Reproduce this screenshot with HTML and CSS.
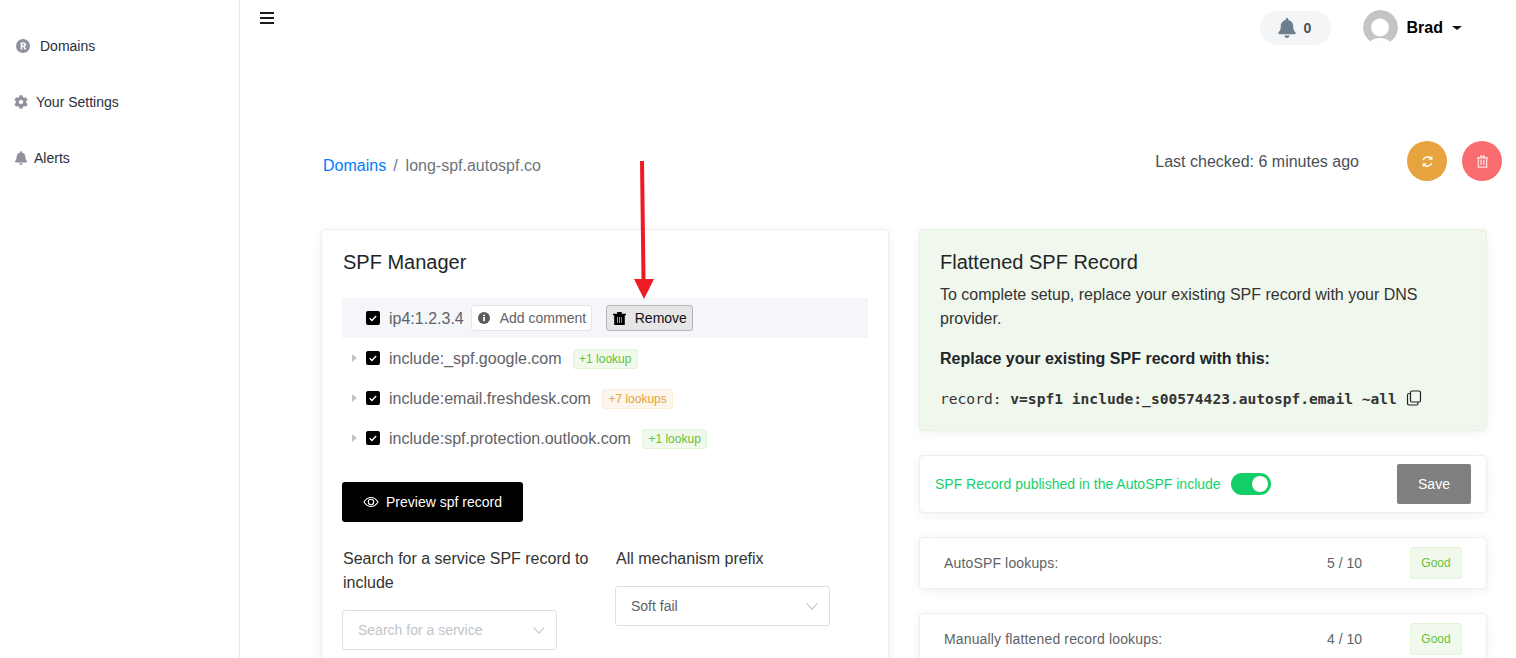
FILE: index.html
```html
<!DOCTYPE html>
<html lang="en">
<head>
    <meta charset="UTF-8">
    <meta name="viewport" content="width=device-width, initial-scale=1.0">
    <title>long-spf.autospf.co - AutoSPF</title>
    <link rel="stylesheet" href="styles.css">
</head>
<body>
    <aside class="sidebar">
        <a class="nav-item nav-domains" href="#">
            <svg class="nav-icon" viewBox="0 0 14 14"><circle cx="7" cy="7" r="7" fill="#8f929c"/><path d="M4.7 10.6V3.4h2.9c1.6 0 2.5.8 2.5 2.1 0 1-.5 1.7-1.4 2l1.7 3.1H8.600L7.200 7.800H6.300v2.800zM6.300 6.500h1.200c.7 0 1-.3 1-.9s-.3-.9-1-.9H6.300z" fill="#fff"/></svg>
            Domains
        </a>
        <a class="nav-item nav-settings" href="#">
            <svg class="nav-icon" viewBox="0 0 512 512"><path fill="#8f929c" d="M487.4 315.7l-42.6-24.6c4.3-23.2 4.3-47 0-70.2l42.6-24.6c4.9-2.8 7.1-8.6 5.5-14-11.1-35.6-30-67.8-54.7-94.6-3.8-4.1-10-5.1-14.8-2.3L380.8 110c-17.9-15.4-38.5-27.3-60.8-35.1V25.8c0-5.6-3.9-10.5-9.4-11.7-36.7-8.2-74.3-7.8-109.2 0-5.5 1.2-9.4 6.1-9.4 11.7V75c-22.2 7.9-42.8 19.8-60.8 35.1L88.7 85.5c-4.9-2.8-11-1.9-14.8 2.3-24.7 26.7-43.6 58.9-54.7 94.6-1.7 5.4.6 11.2 5.5 14L67.3 221c-4.3 23.2-4.3 47 0 70.2l-42.6 24.6c-4.9 2.8-7.1 8.6-5.5 14 11.1 35.6 30 67.8 54.7 94.6 3.8 4.1 10 5.1 14.8 2.3l42.6-24.6c17.9 15.4 38.5 27.3 60.8 35.1v49.2c0 5.6 3.9 10.5 9.4 11.7 36.7 8.2 74.3 7.8 109.2 0 5.5-1.2 9.4-6.1 9.4-11.7v-49.2c22.2-7.9 42.8-19.8 60.8-35.1l42.6 24.6c4.9 2.8 11 1.9 14.8-2.3 24.7-26.7 43.6-58.9 54.7-94.6 1.5-5.5-.7-11.3-5.6-14.1zM256 336c-44.1 0-80-35.9-80-80s35.9-80 80-80 80 35.9 80 80-35.9 80-80 80z"/></svg>
            Your Settings
        </a>
        <a class="nav-item nav-alerts" href="#">
            <svg class="nav-icon" viewBox="0 0 448 512"><path fill="#8f929c" d="M224 512c35.32 0 63.97-28.65 63.97-64H160.030c0 35.35 28.65 64 63.97 64zm215.39-149.71c-19.32-20.76-55.47-51.99-55.47-154.29 0-77.7-54.48-139.9-127.94-155.16V32c0-17.67-14.32-32-31.98-32s-31.98 14.33-31.98 32v20.84C118.56 68.1 64.08 130.3 64.08 208c0 102.3-36.15 133.53-55.47 154.29-6 6.45-8.66 14.16-8.61 21.71.11 16.4 12.98 32 32.1 32h383.8c19.12 0 32-15.6 32.1-32 .05-7.55-2.61-15.27-8.61-21.71z"/></svg>
            Alerts
        </a>
    </aside>

    <main class="main">
        <header class="topbar">
            <button class="menu-toggle" aria-label="Menu"><span></span><span></span><span></span></button>
            <div class="notif-pill">
                <svg class="notif-bell" viewBox="0 0 448 512"><path fill="#6c7f8c" d="M224 512c35.32 0 63.97-28.65 63.97-64H160.030c0 35.35 28.65 64 63.97 64zm215.39-149.71c-19.32-20.76-55.47-51.99-55.47-154.29 0-77.7-54.48-139.9-127.94-155.16V32c0-17.67-14.32-32-31.98-32s-31.98 14.33-31.98 32v20.84C118.56 68.1 64.08 130.3 64.08 208c0 102.3-36.15 133.53-55.47 154.29-6 6.45-8.66 14.16-8.61 21.71.11 16.4 12.98 32 32.1 32h383.8c19.12 0 32-15.6 32.1-32 .05-7.55-2.61-15.27-8.61-21.71z"/></svg>
                <span>0</span>
            </div>
            <div class="user-menu">
                <svg class="avatar" viewBox="0 0 35 35"><circle cx="17.500" cy="17.500" r="17.500" fill="#c4c4c4"/><circle cx="17" cy="17.500" r="9" fill="#fff"/><ellipse cx="17" cy="36" rx="12" ry="8" fill="#fff"/></svg>
                <span class="user-name">Brad</span>
                <span class="caret"></span>
            </div>
        </header>

        <div class="page-head">
            <nav class="crumbs">
                <a href="#">Domains</a>
                <span class="crumb-sep">/</span>
                <span class="crumb-current">long-spf.autospf.co</span>
            </nav>
            <span class="last-checked">Last checked: 6 minutes ago</span>
            <button class="round-btn round-sync" aria-label="Refresh">
                <svg viewBox="0 0 14 14" fill="none" stroke="#fff" stroke-width="1.500"><path d="M2.200 5.500A5 5 0 0 1 11 4"/><path d="M11.800 8.500A5 5 0 0 1 3 10"/><path d="M11.700 1.300v3.200H8.500M2.300 12.700V9.500h3.200" stroke-width="1.200"/></svg>
            </button>
            <button class="round-btn round-delete" aria-label="Delete">
                <svg viewBox="0 0 14 14" fill="none" stroke="#ffe3e4" stroke-width="1.300"><path d="M1 3h12M5 3V1.200h4V3M2.500 3v10h9V3"/><path d="M5.500 5.200v5.600M8.500 5.200v5.600"/></svg>
            </button>
        </div>

        <div class="columns">
            <section class="card manager">
                <h2 class="card-title">SPF Manager</h2>
                <ul class="record-list">
                    <li class="record record-active">
                        <span class="tree-caret tree-caret-empty"></span>
                        <span class="check"><svg viewBox="0 0 14 14" fill="none" stroke="#fff" stroke-width="1.400"><path d="M3.700 7.300l2.200 2.100 4.300-4.400"/></svg></span>
                        <span class="record-name">ip4:1.2.3.4</span>
                        <button class="btn-comment">
                            <svg viewBox="0 0 12 12"><circle cx="6" cy="6" r="6" fill="#5a5a5a"/><rect x="5.200" y="5" width="1.800" height="4.200" fill="#fff"/><rect x="5.200" y="2.600" width="1.800" height="1.500" fill="#fff"/></svg>
                            Add comment
                        </button>
                        <button class="btn-remove">
                            <svg viewBox="0 0 13 13"><path d="M0 1.700h13v1.500H0zM4.200 0h4.600v1.700H4.200zM1.200 3.200h10.600V13H1.200z" fill="#000"/><path d="M4.500 5v6M6.500 5v6" stroke="#b8a54a" stroke-width="1"/><path d="M8.500 5v6" stroke="#4a90b8" stroke-width="1"/></svg>
                            Remove
                        </button>
                    </li>
                    <li class="record">
                        <span class="tree-caret"></span>
                        <span class="check"><svg viewBox="0 0 14 14" fill="none" stroke="#fff" stroke-width="1.400"><path d="M3.700 7.300l2.200 2.100 4.300-4.400"/></svg></span>
                        <span class="record-name">include:_spf.google.com</span>
                        <span class="tag tag-green">+1 lookup</span>
                    </li>
                    <li class="record">
                        <span class="tree-caret"></span>
                        <span class="check"><svg viewBox="0 0 14 14" fill="none" stroke="#fff" stroke-width="1.400"><path d="M3.700 7.300l2.200 2.100 4.300-4.400"/></svg></span>
                        <span class="record-name">include:email.freshdesk.com</span>
                        <span class="tag tag-orange">+7 lookups</span>
                    </li>
                    <li class="record">
                        <span class="tree-caret"></span>
                        <span class="check"><svg viewBox="0 0 14 14" fill="none" stroke="#fff" stroke-width="1.400"><path d="M3.700 7.300l2.200 2.100 4.300-4.400"/></svg></span>
                        <span class="record-name">include:spf.protection.outlook.com</span>
                        <span class="tag tag-green">+1 lookup</span>
                    </li>
                </ul>

                <button class="btn-preview">
                    <svg viewBox="0 0 16 12" fill="none" stroke="#fff" stroke-width="1.100"><path d="M1 6c1.800-3 4-4.500 7-4.500S13.200 3 15 6c-1.800 3-4 4.500-7 4.500S2.800 9 1 6z"/><circle cx="8" cy="6" r="2.700"/></svg>
                    Preview spf record
                </button>

                <div class="field-row">
                    <div class="field">
                        <label class="field-label">Search for a service SPF record to include</label>
                        <div class="select select-empty">Search for a service<span class="chevron"></span></div>
                    </div>
                    <div class="field">
                        <label class="field-label">All mechanism prefix</label>
                        <div class="select">Soft fail<span class="chevron"></span></div>
                    </div>
                </div>
            </section>

            <div class="side-stack">
                <section class="card flattened">
                    <h2 class="card-title">Flattened SPF Record</h2>
                    <p class="flat-text">To complete setup, replace your existing SPF record with your DNS provider.</p>
                    <p class="flat-strong">Replace your existing SPF record with this:</p>
                    <div class="record-code">
                        <span>record: <b>v=spf1 include:_s00574423.autospf.email ~all</b></span>
                        <svg class="copy-icon" viewBox="0 0 16 16" fill="none" stroke="#222" stroke-width="1.200"><rect x="4.500" y="1" width="10" height="11" rx="1.500"/><path d="M4.500 3.500H3A1.500 1.500 0 0 0 1.500 5v8.500A1.500 1.500 0 0 0 3 15h7.500a1.500 1.500 0 0 0 1.500-1.500V12"/></svg>
                    </div>
                </section>

                <section class="card publish">
                    <span class="publish-text">SPF Record published in the AutoSPF include</span>
                    <span class="toggle"><span class="toggle-knob"></span></span>
                    <button class="btn-save">Save</button>
                </section>

                <section class="card stat">
                    <span class="stat-label">AutoSPF lookups:</span>
                    <span class="stat-count">5 / 10</span>
                    <span class="stat-good">Good</span>
                </section>

                <section class="card stat">
                    <span class="stat-label">Manually flattened record lookups:</span>
                    <span class="stat-count">4 / 10</span>
                    <span class="stat-good">Good</span>
                </section>
            </div>
        </div>
    </main>

    <!-- annotation drawn over the screenshot -->
    <svg class="annotation" viewBox="0 0 20 140" width="20" height="140"><path d="M6 1h4l1.500 118H20L10 139 0 119h7.500z" fill="#ed1c24"/></svg>
</body>
</html>
```

FILE: styles.css
```css
* {
    box-sizing: border-box;
}
html, body {
    height: 100%;
    overflow: hidden;
}
body {
    margin: 0;
    display: flex;
    background: #fff;
    font-family: "Liberation Sans", Arial, sans-serif;
    font-size: 16px;
    color: #212529;
}
button {
    font-family: inherit;
    cursor: pointer;
}

/* sidebar */
.sidebar {
    flex: 0 0 240px;
    height: 658px;
    border-right: 1px solid #e6e6e6;
    padding-top: 18px;
}
.nav-item {
    display: flex;
    align-items: center;
    height: 56px;
    font-size: 14px;
    color: #2b2e3a;
    text-decoration: none;
}
.nav-icon {
    width: 14px;
    height: 14px;
}
.nav-domains {
    padding-left: 16px;
    gap: 10px;
}
.nav-settings {
    padding-left: 14px;
    gap: 8px;
}
.nav-alerts {
    padding-left: 14px;
    gap: 6px;
}

/* top bar */
.main {
    flex: 1;
    min-width: 0;
}
.topbar {
    display: flex;
    align-items: flex-start;
    height: 141px;
    padding: 10px 54px 0 20px;
}
.menu-toggle {
    display: flex;
    flex-direction: column;
    gap: 3px;
    width: 14px;
    margin: 2px auto 0 0;
    padding: 0;
    border: none;
    background: none;
}
.menu-toggle span {
    display: block;
    height: 2px;
    width: 14px;
    background: #1c1c1c;
}
.notif-pill {
    display: flex;
    align-items: center;
    gap: 8px;
    width: 71px;
    height: 34px;
    margin: 1px 32px 0 0;
    padding-left: 18px;
    border-radius: 17px;
    background: #f3f5f7;
    font-size: 14px;
    font-weight: bold;
    color: #495057;
}
.notif-bell {
    width: 18px;
    height: 20px;
}
.user-menu {
    display: flex;
    align-items: center;
    height: 35px;
}
.avatar {
    width: 35px;
    height: 35px;
    border-radius: 50%;
}
.user-name {
    margin-left: 9px;
    font-weight: bold;
    color: #000;
}
.caret {
    width: 0;
    height: 0;
    margin-left: 9px;
    border-left: 5px solid transparent;
    border-right: 5px solid transparent;
    border-top: 4px solid #111;
}

/* breadcrumb row */
.page-head {
    display: flex;
    align-items: center;
    height: 40px;
    padding: 0 14px 0 83px;
}
.crumbs {
    margin: 10px auto 0 0;
    display: flex;
    gap: 8px;
}
.crumbs a {
    color: #007bff;
    text-decoration: none;
    margin-right: -1px;
}
.crumb-sep, .crumb-current {
    color: #6c757d;
}
.last-checked {
    color: #495057;
    margin-right: 48px;
    padding-top: 2px;
}
.round-btn {
    display: flex;
    align-items: center;
    justify-content: center;
    width: 40px;
    height: 40px;
    padding: 0;
    border: none;
    border-radius: 50%;
}
.round-btn svg {
    width: 13px;
    height: 13px;
}
.round-sync {
    background: #e7a33e;
    margin-right: 15px;
}
.round-delete {
    background: #f96d70;
}

/* main columns */
.columns {
    display: grid;
    grid-template-columns: 568px 568px;
    gap: 30px;
    margin-top: 48px;
    padding-left: 81px;
}
.card {
    background: #fff;
    border: 1px solid #ebeef5;
    border-radius: 4px;
    box-shadow: 0 2px 12px rgba(0, 0, 0, 0.06);
}
.card-title {
    margin: 0;
    font-size: 20px;
    font-weight: normal;
    line-height: 24px;
    color: #212529;
}
.manager {
    padding: 20px 20px 40px;
}
.manager .card-title {
    padding-left: 1px;
}

/* records */
.record-list {
    list-style: none;
    margin: 24px 0 24px;
    padding: 0;
}
.record {
    display: flex;
    align-items: center;
    height: 40px;
    padding-left: 10px;
    color: #5f6368;
}
.record-active {
    background: #f4f6fa;
}
.tree-caret {
    width: 0;
    height: 0;
    border-top: 4px solid transparent;
    border-bottom: 4px solid transparent;
    border-left: 5px solid #c6c6c6;
}
.tree-caret-empty {
    border-left-color: transparent;
}
.check {
    display: block;
    width: 14px;
    height: 14px;
    margin-left: 9px;
    background: #000;
    border-radius: 2px;
}
.check svg {
    display: block;
}
.record-name {
    margin-left: 9px;
    padding-top: 2px;
}
.btn-comment, .btn-remove {
    display: flex;
    align-items: center;
    height: 26px;
    font-size: 14px;
    border-radius: 3px;
    padding: 0;
}
.btn-comment svg {
    width: 12px;
    height: 12px;
    margin-right: 10px;
}
.btn-comment {
    width: 121px;
    margin-left: 7px;
    padding-left: 6px;
    background: #fff;
    border: 1px solid #e2e5ea;
    color: #606266;
}
.btn-remove {
    width: 87px;
    margin-left: 14px;
    padding-left: 6px;
    background: #e6e6e6;
    border: 1px solid #b4b4b4;
    color: #111;
}
.btn-remove svg {
    width: 13px;
    height: 13px;
    margin-right: 9px;
}
.tag {
    display: inline-block;
    height: 20px;
    line-height: 19px;
    margin: 2px 0 0 11px;
    padding: 0 5.500px;
    border-radius: 3px;
    font-size: 12px;
}
.tag-green {
    background: #f0f9eb;
    border: 1px solid #e1f3d8;
    color: #67c23a;
}
.tag-orange {
    background: #fdf6ec;
    border: 1px solid #faecd8;
    color: #e6a23c;
}
.btn-preview {
    display: flex;
    align-items: center;
    width: 181px;
    height: 40px;
    padding: 0 0 0 21px;
    border: none;
    border-radius: 3px;
    background: #000;
    color: #fff;
    font-size: 14px;
}
.btn-preview svg {
    width: 16px;
    height: 12px;
    margin-right: 7px;
}

/* form fields */
.field-row {
    display: grid;
    grid-template-columns: 257px 257px;
    gap: 16px;
    margin-top: 25px;
}
.field-label {
    display: block;
    line-height: 24px;
    margin-bottom: 15px;
    padding-left: 1px;
    color: #333;
}
.select {
    display: flex;
    align-items: center;
    justify-content: space-between;
    width: 215px;
    height: 40px;
    padding: 0 12px 0 15px;
    border: 1px solid #dcdfe6;
    border-radius: 3px;
    font-size: 14px;
    color: #606266;
}
.select-empty {
    color: #c0c4cc;
}
.chevron {
    width: 8px;
    height: 8px;
    margin: -4px 1px 0 0;
    border-right: 1px solid #c0c4cc;
    border-bottom: 1px solid #c0c4cc;
    transform: rotate(45deg);
}

/* right column */
.side-stack {
    display: flex;
    flex-direction: column;
    gap: 24px;
}
.flattened {
    height: 202px;
    padding: 20px;
    background: #f0f7ec;
    border-color: #e9f0e6;
}
.flat-text {
    margin: 9px 0 0;
    line-height: 24px;
    color: #333;
}
.flat-strong {
    margin: 16px 0 0;
    line-height: 24px;
    font-weight: bold;
    color: #212529;
}
.record-code {
    display: flex;
    align-items: center;
    gap: 9px;
    margin-top: 16px;
    font-family: "DejaVu Sans Mono", "Liberation Mono", monospace;
    font-size: 14.600px;
    line-height: 24px;
    color: #333;
}
.copy-icon {
    width: 16px;
    height: 16px;
    margin-top: -3px;
}
.publish {
    display: flex;
    align-items: center;
    height: 58px;
    padding: 0 15px;
}
.publish-text {
    font-size: 14px;
    color: #13d16a;
}
.toggle {
    display: block;
    position: relative;
    width: 40px;
    height: 22px;
    margin-left: 10px;
    border-radius: 11px;
    background: #13ce66;
}
.toggle-knob {
    position: absolute;
    top: 3px;
    right: 3px;
    width: 16px;
    height: 16px;
    border-radius: 50%;
    background: #fff;
}
.btn-save {
    width: 74px;
    height: 40px;
    margin-left: auto;
    border: none;
    border-radius: 2px;
    background: #808080;
    color: #fff;
    font-size: 14px;
}
.stat {
    display: flex;
    align-items: center;
    height: 52px;
    padding: 0 24px;
    font-size: 14px;
    color: #606266;
}
.stat-label {
    flex: 1;
    letter-spacing: 0.150px;
}
.stat-count {
    margin-right: 48px;
}
.stat-good {
    display: flex;
    align-items: center;
    justify-content: center;
    width: 52px;
    height: 32px;
    background: #f0f9eb;
    border: 1px solid #e1f3d8;
    border-radius: 3px;
    font-size: 12px;
    color: #67c23a;
}

/* red arrow annotation sitting over the page */
.annotation {
    position: absolute;
    left: 634px;
    top: 160px;
}
```
